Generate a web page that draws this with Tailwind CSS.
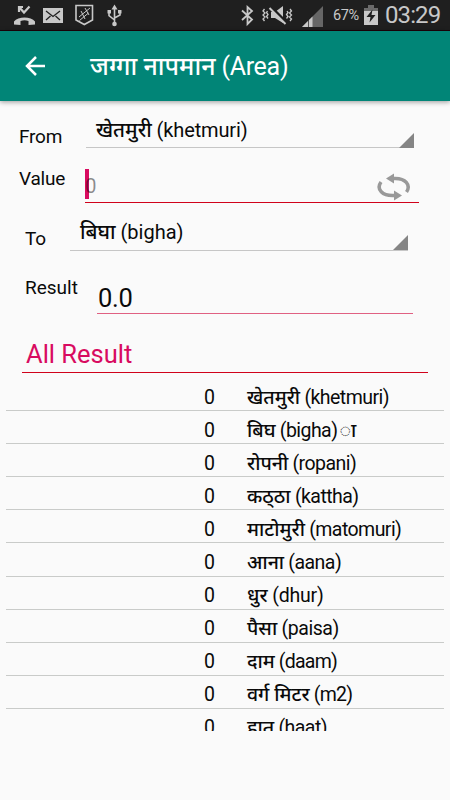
<!DOCTYPE html>
<html lang="ne">
<head>
  <meta charset="UTF-8" />
  <meta name="viewport" content="width=device-width, initial-scale=1.0"/>
  <title>जग्गा नापमान (Area)</title>
  <script src="https://cdn.jsdelivr.net/npm/@tailwindcss/browser@4"></script>
</head>
<body class="w-[450px] h-[800px] overflow-hidden bg-[#fafafa] text-[#0a0a0a] font-[Roboto,'Noto_Sans',sans-serif] text-[19.5px] whitespace-nowrap flex flex-col">

  <!-- Status bar -->
  <div class="h-[31px] shrink-0 bg-[#1f1f1f] border-b border-[#1c0008] flex items-center justify-between text-[#c8c8c8]">
    <svg class="w-[130px] h-[30px]" viewBox="0 0 130 30" fill="none" stroke="#c8c8c8">
      <path d="M14 24.500v-3c4-5.500 17-5.500 21 0v3l-6.500.5v-4c-3-1-5-1-8 0v4z" fill="#c8c8c8" stroke="none"/>
      <path d="M19 12V7h4M19.500 7.500l4.500 5 5.500-6" stroke-width="2.200"/>
      <path d="M43 8h20v15H43z" fill="#c8c8c8" stroke="none"/>
      <path d="M46 11l7 5.500 7-5.500M46 20l4.500-4M60 20l-4.500-4" stroke="#1f1f1f" stroke-width="1.300"/>
      <path d="M76 5.500h16.500V20l-8.200 4.500L76 20z" stroke-width="1.600"/>
      <path d="M79 17l11-9M79.500 20.500l9-7.500M81 11l4 8M85 8l4 7" stroke-width="1"/>
      <path d="M114.500 8v16M109 12v3.500l5.500 4.500M120 11v4l-5.500 3" stroke-width="1.600"/>
      <path d="M111.500 9.500l3-5 3 5zM107.500 10h3.500v3.500h-3.500zM118 10h3.500v3.500H118z" fill="#c8c8c8" stroke="none"/>
      <circle cx="114.500" cy="24" r="2.300" fill="#c8c8c8" stroke="none"/>
    </svg>
    <div class="flex items-center">
      <svg class="w-[92px] h-[30px]" viewBox="238 0 92 30" fill="none" stroke="#c8c8c8">
        <path d="M242 10.500l10 9-4.500 4.500V7l4.500 4-10 9" stroke-width="1.800"/>
        <path d="M264.500 9l-1.500 2 2 2-2 2 2 2-2 2 1.500 2M267.500 11l-1 1.500 1.500 2-1.500 2 1.500 2M290 9l1.500 2-2 2 2 2-2 2 2 2-1.500 2M287 11l1 1.500-1.500 2 1.500 2-1.500 2" stroke-width="1.300"/>
        <path d="M271 12h4l8-6v17l-8-5h-4z" fill="#c8c8c8" stroke="none"/>
        <path d="M271 7l16 16" stroke="#1f1f1f" stroke-width="3"/>
        <path d="M269.500 8l16 16" stroke-width="2"/>
        <path d="M302 27l21-21v21z" fill="#666" stroke="none"/>
        <path d="M302 27l10.500-10.500V27z" fill="#c8c8c8" stroke="none"/>
        <path d="M308.500 19v8" stroke="#1f1f1f" stroke-width=".7"/>
      </svg>
      <span class="w-[33px] pl-[3px] text-[14.500px] tracking-[-0.4px] pt-[2px]">67%</span>
      <svg class="w-[16px] h-[30px]" viewBox="0 0 16 30">
        <path d="M5 5h6v3h4v17H1V8h4z" fill="#c8c8c8"/>
        <path d="M5 5h6v3h4v3H1V8h4z" fill="#6b6b6b"/>
        <path d="M9.500 9.500L3.500 17h4l-1 5.500 6-7.500h-4z" fill="#1f1f1f"/>
      </svg>
      <span class="w-[71px] pl-[6px] text-[24px] leading-[30px] tracking-[-0.9px]">03:29</span>
    </div>
  </div>

  <!-- Toolbar -->
  <header class="h-[70px] shrink-0 bg-[#018577] shadow-[0_1px_5px_rgba(0,0,0,0.4)] flex items-center text-white">
    <svg class="w-[20px] h-[20px] ml-[25px] mr-[45px]" viewBox="0 0 20 20" fill="none" stroke="#fff" stroke-width="2.500">
      <path d="M20 10H2M11 1L2 10l9 9"/>
    </svg>
    <h1 class="text-[25px] leading-[36px] pt-px"><span class="font-medium">जग्गा नापमान</span><span class="tracking-[-0.3px]"> (Area)</span></h1>
  </header>

  <!-- Conversion form -->
  <main class="flex flex-col">
    <div class="h-[48px] pl-[19px] flex">
      <label class="w-[67px] pt-[24px] leading-[24px] text-[19px] tracking-[-0.2px]">From</label>
      <div class="w-[328px] h-[47px] pl-[10px] pt-[17px] leading-[24px] text-[20px] border-b border-[#c6c6c6] flex justify-between">
        <span><span class="font-medium text-[20.500px]">खेतमुरी</span><span class="tracking-[-0.15px]"> (khetmuri)</span></span>
        <svg class="w-[15px] h-[15px] mt-[15px]" viewBox="0 0 15 15"><path d="M15 0v15H0z" fill="#858585"/></svg>
      </div>
    </div>

    <div class="h-[54px] pl-[19px] flex">
      <label class="w-[66px] pt-[18px] leading-[24px] text-[19px] tracking-[-0.2px]">Value</label>
      <div class="relative w-[334px] border-b border-[#d0021b] pt-[24px] leading-[24px] flex justify-between">
        <span class="absolute left-0 top-[20px] w-[4px] h-[30px] bg-[#d80b60]"></span>
        <span class="relative pt-px text-[20.500px] text-black/45">0</span>
        <svg class="w-[34px] h-[28px] mr-[8px]" viewBox="0 0 34 28" fill="none" stroke="#999" stroke-width="3.500">
          <path d="M16 5.500c13-1 18 7 13.500 13.500M18 22.500C5 23.500-1 16 4 9"/>
          <path d="M9 5.500L17 .5v10zM25 22.500l-8-5v10z" fill="#999" stroke="none"/>
        </svg>
      </div>
    </div>

    <div class="h-[48px] pl-[25px] flex">
      <label class="w-[45px] pt-[24px] leading-[24px] text-[19px] tracking-[-0.2px]">To</label>
      <div class="w-[338px] pl-[10px] pt-[17px] leading-[24px] text-[20px] border-b border-[#c6c6c6] flex justify-between">
        <span><span class="font-medium text-[20.500px]">बिघा</span> (bigha)</span>
        <svg class="w-[15px] h-[15px] mt-[15px]" viewBox="0 0 15 15"><path d="M15 0v15H0z" fill="#858585"/></svg>
      </div>
    </div>

    <div class="h-[63px] pl-[25px] flex">
      <label class="w-[72px] pt-[25px] leading-[24px] text-[19px]">Result</label>
      <div class="w-[316px] pl-px pt-[32px] leading-[30px] text-[25.500px] tracking-[-0.3px] border-b border-b-[rgb(224,96,130)]">0.0</div>
    </div>

    <!-- Results -->
    <h2 class="ml-[22px] w-[406px] h-[59px] pl-[4px] pt-[25px] text-[25.500px] leading-[30px] text-[#d80b60] border-b border-[#d0021b]">All Result</h2>
    <ul class="mx-[6px] h-[358px] overflow-hidden pt-[5px]">
      <li class="h-[33.100px] border-b border-[#c9cbc9] pt-[7.500px] leading-[24px] flex"><span class="w-[209px] text-right">0</span><span class="pl-[32px] font-medium">खेतमुरी</span><span class="whitespace-pre tracking-[-0.55px]"> (khetmuri)</span></li>
      <li class="h-[33.100px] border-b border-[#c9cbc9] pt-[7.500px] leading-[24px] flex"><span class="w-[209px] text-right">0</span><span class="pl-[32px] font-medium">बिघ</span><span class="whitespace-pre tracking-[-0.55px]"> (bigha)</span><span class="pl-[2px] font-medium">ा</span></li>
      <li class="h-[33.100px] border-b border-[#c9cbc9] pt-[7.500px] leading-[24px] flex"><span class="w-[209px] text-right">0</span><span class="pl-[32px] font-medium">रोपनी</span><span class="whitespace-pre tracking-[-0.55px]"> (ropani)</span></li>
      <li class="h-[33.100px] border-b border-[#c9cbc9] pt-[7.500px] leading-[24px] flex"><span class="w-[209px] text-right">0</span><span class="pl-[32px] font-medium">कठ्&zwnj;ठा</span><span class="whitespace-pre tracking-[-0.55px]"> (kattha)</span></li>
      <li class="h-[33.100px] border-b border-[#c9cbc9] pt-[7.500px] leading-[24px] flex"><span class="w-[209px] text-right">0</span><span class="pl-[32px] font-medium">माटोमुरी</span><span class="whitespace-pre tracking-[-0.55px]"> (matomuri)</span></li>
      <li class="h-[33.100px] border-b border-[#c9cbc9] pt-[7.500px] leading-[24px] flex"><span class="w-[209px] text-right">0</span><span class="pl-[32px] font-medium">आना</span><span class="whitespace-pre tracking-[-0.55px]"> (aana)</span></li>
      <li class="h-[33.100px] border-b border-[#c9cbc9] pt-[7.500px] leading-[24px] flex"><span class="w-[209px] text-right">0</span><span class="pl-[32px] font-medium">धुर</span><span class="whitespace-pre tracking-[-0.2px]"> (dhur)</span></li>
      <li class="h-[33.100px] border-b border-[#c9cbc9] pt-[7.500px] leading-[24px] flex"><span class="w-[209px] text-right">0</span><span class="pl-[32px] font-medium">पैसा</span><span class="whitespace-pre tracking-[-0.45px]"> (paisa)</span></li>
      <li class="h-[33.100px] border-b border-[#c9cbc9] pt-[7.500px] leading-[24px] flex"><span class="w-[209px] text-right">0</span><span class="pl-[32px] font-medium">दाम</span><span class="whitespace-pre tracking-[-0.75px]"> (daam)</span></li>
      <li class="h-[33.100px] border-b border-[#c9cbc9] pt-[7.500px] leading-[24px] flex"><span class="w-[209px] text-right">0</span><span class="pl-[32px] font-medium">वर्ग मिटर</span><span class="whitespace-pre tracking-[-0.75px]"> (m2)</span></li>
      <li class="h-[33.100px] pt-[7.500px] leading-[24px] flex"><span class="w-[209px] text-right">0</span><span class="pl-[32px] font-medium">हात</span><span class="whitespace-pre tracking-[-0.55px]"> (haat)</span></li>
    </ul>
  </main>

</body>
</html>
